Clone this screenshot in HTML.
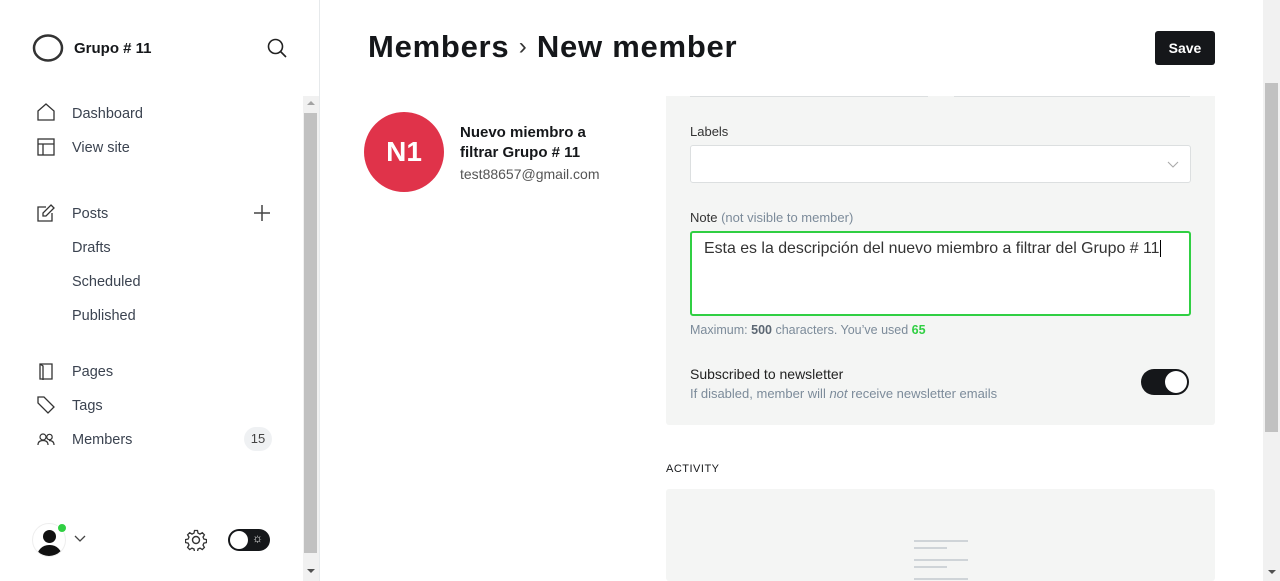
<!DOCTYPE html>
<html><head><meta charset="utf-8"><style>
*{box-sizing:border-box;margin:0;padding:0}
body{width:1280px;height:581px;overflow:hidden;background:#fff;font-family:"Liberation Sans",sans-serif;color:#15171a;position:relative}
.side{position:absolute;left:0;top:0;width:320px;height:581px;border-right:1px solid #e6e9eb;background:#fff}
.nav{position:absolute;left:72px;font-size:14.5px;color:#3b4350}
.ic{position:absolute;left:37px}
.abs{position:absolute}
</style></head><body>
<div class="side">
 <svg class="abs" style="left:32px;top:33px" width="32" height="30" viewBox="0 0 32 30"><ellipse cx="16" cy="15" rx="14" ry="12.5" fill="none" stroke="#333" stroke-width="2.5"/></svg>
 <div class="abs" style="left:74px;top:40px;font-size:15px;font-weight:bold">Grupo # 11</div>
 <svg class="abs" style="left:267px;top:38px" width="20" height="20" viewBox="0 0 20 20"><circle cx="8.5" cy="8.5" r="7" fill="none" stroke="#222" stroke-width="1.6"/><path d="M13.5 13.5L19 19" stroke="#222" stroke-width="1.6"/></svg>
 <svg class="ic" style="top:103px" width="18" height="18" viewBox="0 0 18 18"><path d="M1 8L9 1l8 7v9H1z" fill="none" stroke="#333" stroke-width="1.3"/></svg>
 <div class="nav" style="top:106px">Dashboard</div>
 <svg class="ic" style="top:138px" width="18" height="18" viewBox="0 0 18 18"><rect x="1" y="1" width="16" height="16" fill="none" stroke="#333" stroke-width="1.3"/><path d="M1 6h16M6 6v11" stroke="#333" stroke-width="1.3"/></svg>
 <div class="nav" style="top:140px">View site</div>
 <svg class="ic" style="top:204px" width="18" height="18" viewBox="0 0 18 18"><path d="M9 3H1v14h14V9" fill="none" stroke="#333" stroke-width="1.3"/><path d="M14 1l3 3-8 8H6V9z" fill="none" stroke="#333" stroke-width="1.3"/></svg>
 <div class="nav" style="top:206px">Posts</div>
 <svg class="abs" style="left:253px;top:204px" width="18" height="18"><path d="M9 1v16M1 9h16" stroke="#444" stroke-width="1.5"/></svg>
 <div class="nav" style="top:240px">Drafts</div>
 <div class="nav" style="top:274px">Scheduled</div>
 <div class="nav" style="top:308px">Published</div>
 <svg class="ic" style="top:362px" width="18" height="18" viewBox="0 0 18 18"><path d="M3 2h12v15H3zM3 2l3 2v14" fill="none" stroke="#333" stroke-width="1.3"/></svg>
 <div class="nav" style="top:364px">Pages</div>
 <svg class="ic" style="top:396px" width="18" height="18" viewBox="0 0 18 18"><path d="M1 4V1h6l10 10-6 6L1 7z" fill="none" stroke="#333" stroke-width="1.3"/></svg>
 <div class="nav" style="top:398px">Tags</div>
 <svg class="ic" style="top:430px" width="18" height="18" viewBox="0 0 18 18"><circle cx="6" cy="7" r="3" fill="none" stroke="#333" stroke-width="1.2"/><circle cx="12.5" cy="7" r="2.7" fill="none" stroke="#333" stroke-width="1.2"/><path d="M1 15c0-3 2-4.5 5-4.5s5 1.5 5 4.5M12 10.5c3 0 5 1.5 5 4.5" fill="none" stroke="#333" stroke-width="1.2"/></svg>
 <div class="nav" style="top:432px">Members</div>
 <div class="abs" style="left:244px;top:427px;width:28px;height:24px;border-radius:12px;background:#eff1f3;font-size:13px;color:#444;text-align:center;line-height:24px">15</div>
 <div class="abs" style="left:32px;top:523px;width:34px;height:34px;border-radius:50%;background:#fff;border:1px solid #eee;overflow:hidden"><div class="abs" style="left:10px;top:6px;width:13px;height:13px;border-radius:50%;background:#111"></div><div class="abs" style="left:4px;top:21px;width:25px;height:16px;border-radius:12px 12px 0 0;background:#111"></div></div>
 <div class="abs" style="left:57px;top:523px;width:10px;height:10px;border-radius:50%;background:#30cf43;border:1px solid #fff"></div>
 <svg class="abs" style="left:74px;top:535px" width="12" height="8"><path d="M1 1l5 5 5-5" fill="none" stroke="#444" stroke-width="1.3"/></svg>
 <svg class="abs" style="left:185px;top:529px" width="22" height="22" viewBox="0 0 22 22"><circle cx="11" cy="11" r="3.5" fill="none" stroke="#333" stroke-width="1.4"/><path d="M9.5 1.5h3l.5 2.6 2 1 2.3-1.4 2.1 2.1-1.4 2.3.9 2 2.6.5v3l-2.6.5-.9 2 1.4 2.3-2.1 2.1-2.3-1.4-2 .9-.5 2.6h-3l-.5-2.6-2-.9-2.3 1.4-2.1-2.1 1.4-2.3-.9-2-2.6-.5v-3l2.6-.5.9-2-1.4-2.3 2.1-2.1 2.3 1.4 2-1z" fill="none" stroke="#333" stroke-width="1.3"/></svg>
 <div class="abs" style="left:228px;top:529px;width:42px;height:22px;border-radius:11px;background:#15171a"></div>
 <div class="abs" style="left:230px;top:531px;width:18px;height:18px;border-radius:50%;background:#fff"></div>
 <div class="abs" style="left:252px;top:531px;font-size:12px;color:#fff">☼</div>
 <div class="abs" style="left:303px;top:96px;width:16px;height:485px;background:#f1f1f1"></div>
 <div class="abs" style="left:304px;top:113px;width:13px;height:440px;background:#c1c1c1"></div>
 <div class="abs" style="left:307px;top:101px;width:0;height:0;border:4px solid transparent;border-bottom-color:#a3a3a3;border-top:0"></div>
 <div class="abs" style="left:307px;top:569px;width:0;height:0;border:4px solid transparent;border-top-color:#505050;border-bottom:0"></div>
</div>

<div class="abs" style="left:368px;top:29px;font-size:31px;font-weight:bold;letter-spacing:0.75px;white-space:nowrap">Members <span style="font-weight:normal;font-size:24px;position:relative;top:-3px;color:#333">›</span> New member</div>
<div class="abs" style="left:1155px;top:31px;width:60px;height:34px;background:#15171a;border-radius:3px;color:#fff;font-size:14px;font-weight:bold;text-align:center;line-height:34px">Save</div>

<div class="abs" style="left:364px;top:112px;width:80px;height:80px;border-radius:50%;background:#e0334a;color:#fff;font-size:28px;font-weight:bold;text-align:center;line-height:80px">N1</div>
<div class="abs" style="left:460px;top:123px;font-size:15px;font-weight:bold;line-height:20px;width:160px">Nuevo miembro a filtrar Grupo # 11</div>
<div class="abs" style="left:460px;top:166px;font-size:14px;color:#555">test88657@gmail.com</div>

<div class="abs" style="left:666px;top:96px;width:549px;height:329px;background:#f4f5f4;border-radius:0 0 3px 3px"></div>
<div class="abs" style="left:690px;top:96px;width:238px;height:1px;background:#dcdfe0"></div>
<div class="abs" style="left:954px;top:96px;width:236px;height:1px;background:#dcdfe0"></div>
<div class="abs" style="left:690px;top:124px;font-size:13px;color:#333">Labels</div>
<div class="abs" style="left:690px;top:145px;width:501px;height:38px;background:#fff;border:1px solid #dcdfe0;border-radius:3px"></div>
<svg class="abs" style="left:1167px;top:161px" width="12" height="8"><path d="M1 1l5 5 5-5" fill="none" stroke="#aaa" stroke-width="1.1"/></svg>
<div class="abs" style="left:690px;top:210px;font-size:13px;color:#333">Note <span style="color:#7c8b9a">(not visible to member)</span></div>
<div class="abs" style="left:690px;top:231px;width:501px;height:85px;background:#fff;border:2px solid #30cf43;border-radius:3px"></div>
<div class="abs" style="left:704px;top:240px;font-size:15.9px;color:#333;white-space:nowrap">Esta es la descripción del nuevo miembro a filtrar del Grupo # 11<span style="border-left:1px solid #000;margin-left:1px"></span></div>
<div class="abs" style="left:690px;top:323px;font-size:12.5px;color:#7c8b9a">Maximum: <b style="color:#5c6773">500</b> characters. You’ve used <b style="color:#30cf43">65</b></div>
<div class="abs" style="left:690px;top:366px;font-size:14px;color:#222">Subscribed to newsletter</div>
<div class="abs" style="left:690px;top:386px;font-size:13px;color:#7c8b9a">If disabled, member will <i>not</i> receive newsletter emails</div>
<div class="abs" style="left:1141px;top:369px;width:48px;height:26px;border-radius:13px;background:#15171a"></div>
<div class="abs" style="left:1165px;top:371px;width:22px;height:22px;border-radius:50%;background:#fff"></div>

<div class="abs" style="left:666px;top:463px;font-size:11px;color:#15171a;letter-spacing:0.5px">ACTIVITY</div>
<div class="abs" style="left:666px;top:489px;width:549px;height:92px;background:#f4f5f4;border-radius:3px"></div>
<div class="abs" style="left:914px;top:540px;width:54px;height:2px;background:#cfd4d8"></div>
<div class="abs" style="left:914px;top:547px;width:33px;height:2px;background:#cfd4d8"></div>
<div class="abs" style="left:914px;top:559px;width:54px;height:2px;background:#cfd4d8"></div>
<div class="abs" style="left:914px;top:566px;width:33px;height:2px;background:#cfd4d8"></div>
<div class="abs" style="left:914px;top:578px;width:54px;height:2px;background:#cfd4d8"></div>

<div class="abs" style="left:1263px;top:0;width:17px;height:581px;background:#f1f1f1"></div>
<div class="abs" style="left:1265px;top:83px;width:13px;height:349px;background:#c1c1c1"></div>
<div class="abs" style="left:1268px;top:570px;width:0;height:0;border:4px solid transparent;border-top-color:#505050;border-bottom:0"></div>
</body></html>
